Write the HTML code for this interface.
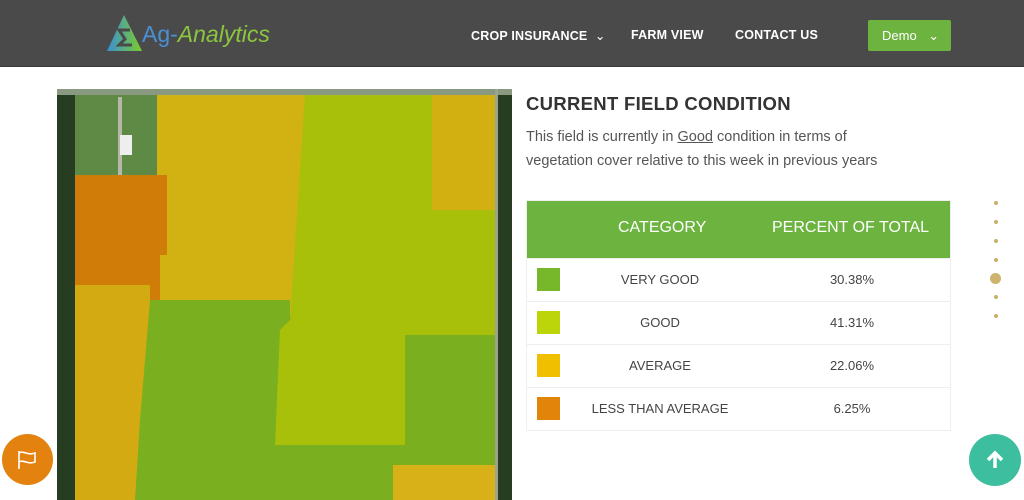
<!DOCTYPE html>
<html><head><meta charset="utf-8"><style>
*{margin:0;padding:0;box-sizing:border-box}
body{width:1024px;height:500px;overflow:hidden;background:#fff;font-family:"Liberation Sans",sans-serif;position:relative}
.hdr{position:absolute;left:0;top:0;width:1024px;height:67px;background:#4a4a4a;border-bottom:1px solid #3a3a3a}
.nav{position:absolute;top:28px;color:#fff;font-size:12.5px;letter-spacing:.2px;font-weight:bold}
.demo{position:absolute;left:868px;top:20px;width:83px;height:31px;background:#6db33f;color:#fff;font-size:13px;line-height:31px;padding-left:14px;border-radius:2px}
h2{position:absolute;left:526px;top:93px;font-size:18.5px;font-weight:bold;color:#333;letter-spacing:.3px}
.p{position:absolute;left:526px;top:125px;font-size:14.5px;color:#555;line-height:24px;width:375px}
.tbl{position:absolute;left:526px;top:200px;width:425px;border:1px solid #eee}
.th{height:57px;background:#6db33f;color:#fff;font-size:16px;position:relative}
.th span{position:absolute;top:18px}
.row{height:43px;border-top:1px solid #eee;position:relative;font-size:13px;color:#444}
.sw{position:absolute;left:10px;top:9px;width:23px;height:23px}
.c1{position:absolute;left:68px;width:130px;text-align:center;top:13px}
.c2{position:absolute;left:260px;width:130px;text-align:center;top:13px}
.dot{position:absolute;left:994px;width:4px;height:4px;border-radius:50%;background:#c8b06a}
</style></head><body>
<div class="hdr">
<svg style="position:absolute;left:106px;top:14px" width="40" height="38" viewBox="0 0 40 38"><defs><linearGradient id="g" x1="0" x2="1"><stop offset="0" stop-color="#3a8fd6"/><stop offset="1" stop-color="#7ccc2a"/></linearGradient></defs><polygon points="18,1 1,37 36,37" fill="url(#g)"/><path d="M24 16 H13 L19 25 L13 31 H26" stroke="#4a4a4a" stroke-width="3" fill="none"/></svg>
<div style="position:absolute;left:142px;top:21px;font-size:23px;color:#4a90d6">Ag-<i style="color:#8cc63f">Analytics</i></div>
<div class="nav" style="left:471px">CROP INSURANCE &nbsp;<span style="font-weight:normal">&#8964;</span></div>
<div class="nav" style="left:631px">FARM VIEW</div>
<div class="nav" style="left:735px">CONTACT US</div>
<div class="demo">Demo <span style="margin-left:8px">&#8964;</span></div>
</div>
<svg style="position:absolute;left:57px;top:89px" width="455" height="411" viewBox="57 89 455 411">
<rect x="57" y="89" width="455" height="411" fill="#263d22"/>
<rect x="57" y="89" width="455" height="6" fill="#8a9a80"/>
<rect x="495" y="89" width="3" height="411" fill="#9aa590"/>
<rect x="75" y="95" width="82" height="80" fill="#5f8a45"/>
<rect x="118" y="97" width="4" height="78" fill="#b8b8a8"/>
<rect x="120" y="135" width="12" height="20" fill="#eee"/>
<rect x="157" y="95" width="150" height="222" fill="#d2b212"/>
<polygon points="305,95 495,95 495,335 405,335 405,445 275,445 275,330 290,320" fill="#a8c00a"/>
<rect x="432" y="95" width="63" height="115" fill="#d2b012"/>
<polygon points="75,175 167,175 167,255 160,255 160,300 75,300" fill="#cf7c08"/>
<polygon points="75,285 150,285 150,500 75,500" fill="#d3aa12"/>
<polygon points="150,300 290,300 290,320 280,330 275,445 440,445 440,465 393,465 393,500 135,500 140,420" fill="#7ab020"/>
<rect x="405" y="335" width="90" height="135" fill="#7ab020"/>
<rect x="393" y="465" width="102" height="35" fill="#d8b018"/>
</svg>
<h2>CURRENT FIELD CONDITION</h2>
<div class="p">This field is currently in <u>Good</u> condition in terms of vegetation cover relative to this week in previous years</div>
<div class="tbl">
<div class="th"><span style="left:91px">CATEGORY</span><span style="left:245px">PERCENT OF TOTAL</span></div>
<div class="row"><div class="sw" style="background:#76b82a"></div><div class="c1">VERY GOOD</div><div class="c2">30.38%</div></div>
<div class="row"><div class="sw" style="background:#bcd40a"></div><div class="c1">GOOD</div><div class="c2">41.31%</div></div>
<div class="row"><div class="sw" style="background:#f0c000"></div><div class="c1">AVERAGE</div><div class="c2">22.06%</div></div>
<div class="row"><div class="sw" style="background:#e2840a"></div><div class="c1" style="left:48px;width:170px">LESS THAN AVERAGE</div><div class="c2">6.25%</div></div>
</div>
<div class="dot" style="top:201px"></div><div class="dot" style="top:220px"></div><div class="dot" style="top:239px"></div><div class="dot" style="top:258px"></div>
<div style="position:absolute;left:990px;top:273px;width:11px;height:11px;border-radius:50%;background:#cdb36c"></div>
<div class="dot" style="top:295px"></div><div class="dot" style="top:314px"></div>
<div style="position:absolute;left:2px;top:434px;width:51px;height:51px;border-radius:50%;background:#e3820f"></div>
<svg style="position:absolute;left:17px;top:450px" width="22" height="20" viewBox="0 0 22 20"><path d="M2 1V19M2 3C7 0 10 6 18 3V12C10 15 7 9 2 12" stroke="#fff" stroke-width="1.6" fill="none"/></svg>
<div style="position:absolute;left:969px;top:434px;width:52px;height:52px;border-radius:50%;background:#3dbf9f"></div>
<svg style="position:absolute;left:985px;top:450px" width="20" height="20" viewBox="0 0 20 20"><path d="M10 18V3M3 10L10 3L17 10" stroke="#fff" stroke-width="3.5" fill="none"/></svg>
</body></html>
